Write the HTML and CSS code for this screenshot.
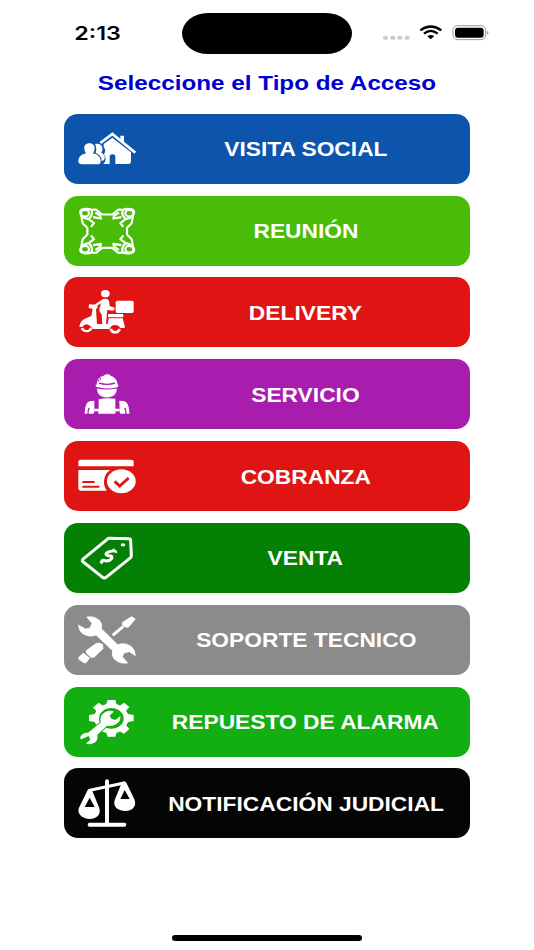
FILE: index.html
```html
<!DOCTYPE html>
<html lang="es">
<head>
    <meta charset="UTF-8">
    <meta name="viewport" content="width=device-width, initial-scale=1.0">
    <title>Tipo de Acceso</title>
    <link rel="stylesheet" href="styles.css">
</head>
<body>

    <!-- Status Bar -->
    <div class="status-bar">
        <div class="time"><span class="wide">2:13</span></div>
        <div class="island"></div>
        <div class="status-icons">
            <svg width="108" height="20" viewBox="0 0 324 60">
                <g fill="#ccc">
                    <rect x="3" y="38" width="15" height="12" rx="5"/>
                    <rect x="25" y="38" width="15" height="12" rx="5"/>
                    <rect x="46" y="38" width="15" height="12" rx="5"/>
                    <rect x="68" y="38" width="15" height="12" rx="5"/>
                </g>
                <g fill="none" stroke="#000" stroke-width="7">
                    <path d="M115 22Q146-1 178 22"/>
                    <path d="M126 32Q146 15 167 32"/>
                </g>
                <path d="M136 40Q146 32 157 40L146 49Z"/>
                <rect x="213" y="8" width="98" height="42" rx="14" fill="none" stroke="#999" stroke-width="3"/>
                <rect x="219" y="14" width="86" height="30" rx="9"/>
                <path d="M316 23q6 6 0 12z" fill="#777"/>
            </svg>
        </div>
    </div>

    <h1 class="title"><span class="wide">Seleccione el Tipo de Acceso</span></h1>

    <div class="menu">
        <button class="option visita">
            <svg class="icon" viewBox="54 41 174 150">
                <path d="M121 98L157 71L226 127" fill="none" stroke="#fff" stroke-width="8"/>
                <path d="M181 76h11v26l-11-8z"/>
                <path d="M131 101L157 82L213 126V153Q213 161 205 161H166V139Q166 132 157 132Q149 132 149 139V161H130Q143 148 132 132Q140 119 131 111Z"/>
                <path d="M105 101Q124 98 127 113Q130 120 124 127Q137 133 134 145Q131 153 122 152Q120 137 106 131Q112 114 105 101Z"/>
                <path d="M73 114C71 94 105 94 104 114Q104 124 99 129Q121 134 122 151Q123 162 112 162H66Q54 162 55 150Q57 134 78 129Q73 124 73 114Z" class="person"/>
            </svg>
            <span class="label"><span class="wide">VISITA SOCIAL</span></span>
        </button>

        <button class="option reunion">
            <svg class="icon line" viewBox="54 46.500 174 150">
                <g id="person">
                    <ellipse cx="75" cy="68" rx="12" ry="10"/>
                    <path d="M64 76Q54 58 72 56Q84 54 94 58L108 57L126 72H142M64 76L68 98L82 112V123"/>
                    <path d="M94 58Q101 72 86 86L102 98L93 109M64 76Q75 85 86 86M99 80L123 84L120 75L106 66"/>
                </g>
                <use href="#person" transform="matrix(-1 0 0 1 283 0)"/>
                <use href="#person" transform="matrix(1 0 0 -1 0 244)"/>
                <use href="#person" transform="matrix(-1 0 0 -1 283 244)"/>
            </svg>
            <span class="label"><span class="wide">REUNIÓN</span></span>
        </button>

        <button class="option delivery">
            <svg class="icon" viewBox="54 46 174 150">
                <ellipse cx="136" cy="66" rx="13" ry="11"/>
                <rect x="167" y="87" width="54" height="37" rx="5"/>
                <rect x="144" y="127" width="46" height="10" rx="3"/>
                <path d="M129 82Q143 79 147 87L149 104L162 107Q167 114 159 117L142 115L141 123L138 158H127L125 128Q117 122 118 113L123 94L107 106L99 102Z"/>
                <path d="M87 98L107 99L114 106L108 113L111 157H143L146 140H188L195 166Q195 170 186 169H181Q176 160 165 160Q153 160 149 172H99Q94 168 91 163Q78 151 66 166L58 165Q61 146 78 140L94 133L98 112L86 108Z"/>
                <path d="M66 169A15 14 0 0 0 94 169" fill="none" stroke="#fff" stroke-width="8"/>
                <path d="M152 172A14 13 0 0 0 179 172" fill="none" stroke="#fff" stroke-width="8"/>
                <ellipse cx="80" cy="171" rx="6" ry="4" class="cut"/>
                <path d="M158 172h15q-7 10-15 0z" class="cut"/>
            </svg>
            <span class="label"><span class="wide">DELIVERY</span></span>
        </button>

        <button class="option servicio">
            <svg class="icon" viewBox="54 45.500 174 150">
                <path d="M110 92Q111 69 131 66Q135 59 148 62L152 66Q171 72 173 92L176 95L172 100Q140 108 109 99L106 95Z"/>
                <path d="M111 104Q141 110 171 104Q169 125 153 129Q141 133 128 129Q112 125 111 104Z"/>
                <path d="M117 88Q141 95 165 88" class="cut-line"/>
                <path d="M114 82L125 70" class="cut-line" stroke-dasharray="5 3"/>
                <path d="M116 136Q142 131 166 135V166H175V172H166V180H115V172H106V166H116Z"/>
                <path d="M83 145Q90 141 103 141V174Q103 180 99 180H74Q74 155 83 145ZM178 141Q192 141 199 145Q208 155 208 180H183Q179 180 179 174Z"/>
                <path d="M88 162Q83 169 84 181M194 162Q199 169 198 181" class="cut-line"/>
                <path d="M103 165h13v7h-13zM166 165h13v7h-13z"/>
            </svg>
            <span class="label"><span class="wide">SERVICIO</span></span>
        </button>

        <button class="option cobranza">
            <svg class="icon" viewBox="54 45 174 150">
                <path d="M55 91V78Q55 71 64 71H212Q221 71 221 78V91Z"/>
                <path d="M55 102H151Q134 112 132 134Q131 152 141 164H64Q55 164 55 157Z"/>
                <ellipse cx="184" cy="136" rx="43" ry="36"/>
                <path d="M67 138H104M67 152H118" class="cut-line bold"/>
                <path d="M164 136L179 150L206 126" class="cut-line check"/>
            </svg>
            <span class="label"><span class="wide">COBRANZA</span></span>
        </button>

        <button class="option venta">
            <svg class="icon" viewBox="54 44.600 174 150">
                <path d="M146 60L207 62Q212 62 212 67L214 113Q214 117 210 120L139 177Q133 182 127 177L69 131Q65 127 70 122Z" fill="none" stroke="#fff" stroke-width="9" stroke-linejoin="round"/>
                <ellipse cx="189" cy="80" rx="7" ry="5"/>
                <path d="M167 104Q168 96 155 99Q141 101 138 107Q137 113 149 113Q159 114 155 121Q148 130 136 128Q126 124 124 132M158 99L164 94M128 128L122 136" fill="none" stroke="#fff" stroke-width="9" stroke-linejoin="round"/>
            </svg>
            <span class="label"><span class="wide">VENTA</span></span>
        </button>

        <button class="option soporte">
            <svg class="icon" viewBox="54 44 174 150">
                <path d="M158 105L190 78" fill="none" stroke="#fff" stroke-width="9"/>
                <path d="M187 66L215 48L227 56L207 80Q202 84 196 81L187 75Q184 70 187 66Z"/>
                <path d="M80 149L109 128L118 127L129 132L130 145L105 169Q97 176 90 169L81 161Q74 155 80 149ZM70 157L90 173L79 187Q74 191 68 186L57 178Q53 174 57 169Z"/>
                <path d="M80 50Q103 46 119 61Q128 70 124 85L173 133Q194 125 213 138Q225 147 226 166L208 154L192 158L187 169L203 188Q179 192 162 175Q154 165 158 151L108 104Q91 112 71 102Q57 94 55 74L77 86L90 83L96 69Z" stroke="#fff" stroke-width="2" stroke-linejoin="round"/>
            </svg>
            <span class="label"><span class="wide">SOPORTE TECNICO</span></span>
        </button>

        <button class="option repuesto">
            <svg class="icon" viewBox="54 43.700 174 150">
                <path d="M143 53H166L169 65L180 69L192 61L208 74L198 85L204 95L221 98V116L204 119L199 129L208 140L192 154L180 147L169 152L166 163H143L139 152L127 147L101 137L109 127L104 119L87 116V98L104 95L109 86L99 75L116 61L128 69L139 65Z"/>
                <ellipse cx="154" cy="108" rx="37" ry="31" class="cut"/>
                <path d="M61 164Q66 151 85 150L122 120Q117 98 137 88Q149 83 162 87L149 99L154 109L166 113L181 101Q183 117 169 125Q157 133 141 130L112 157Q116 178 96 184Q87 187 78 183L91 172L86 161L62 171Z" stroke-width="5" class="wrench"/>
            </svg>
            <span class="label"><span class="wide">REPUESTO DE ALARMA</span></span>
        </button>

        <button class="option judicial">
            <svg class="icon" viewBox="54 43 174 150">
                <path d="M141 53V178M89 183H193" fill="none" stroke="#fff" stroke-width="12" stroke-linecap="round"/>
                <path d="M90 80L192 58" fill="none" stroke="#fff" stroke-width="9" stroke-linecap="round"/>
                <path fill-rule="evenodd" d="M83 79Q89 72 96 80L117 131Q125 154 104 163Q86 171 66 159Q51 148 57 132ZM89 102L74 130H104Z"/>
                <path fill-rule="evenodd" d="M186 56Q193 51 199 57L223 107Q231 127 213 138Q193 147 173 136Q158 126 165 107ZM194 79L181 106H209Z"/>
            </svg>
            <span class="label"><span class="wide">NOTIFICACIÓN JUDICIAL</span></span>
        </button>
    </div>

    <!-- Home indicator -->
    <div class="home-bar"></div>

</body>
</html>
```
FILE: styles.css
```css
body {
    background-color: white;
    display: flex;
    flex-direction: column;
    align-items: center;
    height: 950px;
    margin: 0;
    overflow: hidden;
    font-family: "Liberation Sans", Arial, sans-serif;
}
.status-bar {
    display: grid;
    grid-template-columns: 182px 170px 182px;
    width: 534px;
    height: 54px;
    padding-top: 13px;
    box-sizing: border-box;
}
.island {
    height: 41px;
    border-radius: 26px / 20.5px;
    background-color: #000;
}
.status-icons {
    padding: 10px 0 0 30px;
}
.status-icons svg {
    display: block;
}
/* Extended lettering */
.wide {
    display: inline-block;
    white-space: nowrap;
    transform: scaleX(1.168);
}
.time {
    padding-left: 14px;
    text-align: center;
    font-family: Inter, sans-serif;
    font-size: 18.5px;
    font-weight: 600;
    line-height: 41px;
}
.time .wide {
    transform: scaleX(1.26);
}
.title {
    margin: 17px 0 0;
    color: #0000cd;
    font-size: 20.5px;
    line-height: 24px;
    height: 24px;
}
.title .wide {
    transform: scaleX(1.183);
}
.menu {
    display: flex;
    flex-direction: column;
    gap: 11.85px;
    width: 405.5px;
    margin-top: 18.7px;
}
.option {
    display: flex;
    align-items: center;
    height: 70px;
    padding: 0 0 0 13.6px;
    border: none;
    border-radius: 14px;
    background-color: var(--bg);
    color: white;
    font-family: inherit;
    font-size: 19.5px;
    font-weight: bold;
    cursor: pointer;
}
.visita { --bg: #0d54ac; }
.reunion { --bg: #48bc09; }
.delivery { --bg: #e01412; }
.servicio { --bg: #a91dae; }
.cobranza { --bg: #e01412; }
.venta { --bg: #048004; }
.soporte { --bg: #8b8b8b; }
.repuesto { --bg: #12ae12; }
.judicial { --bg: #050505; }
.icon {
    flex: none;
    width: 58px;
    height: 50px;
    fill: #fff;
}
.icon.line {
    fill: none;
    stroke: #fff;
    stroke-width: 6.5;
    stroke-linejoin: round;
}
.label {
    flex: 1;
    margin-left: 6px;
    padding-top: 2px;
    text-align: center;
}
.cut {
    fill: var(--bg);
}
.cut-line {
    fill: none;
    stroke: var(--bg);
    stroke-width: 4;
}
.bold {
    stroke-width: 6;
}
.check {
    stroke-width: 9;
}
.wrench,
.person {
    stroke: var(--bg);
    paint-order: stroke;
}
.person {
    stroke-width: 6;
}
.home-bar {
    width: 190px;
    height: 5.5px;
    margin-top: auto;
    margin-bottom: 9.5px;
    border-radius: 3px;
    background-color: #000;
}
```
